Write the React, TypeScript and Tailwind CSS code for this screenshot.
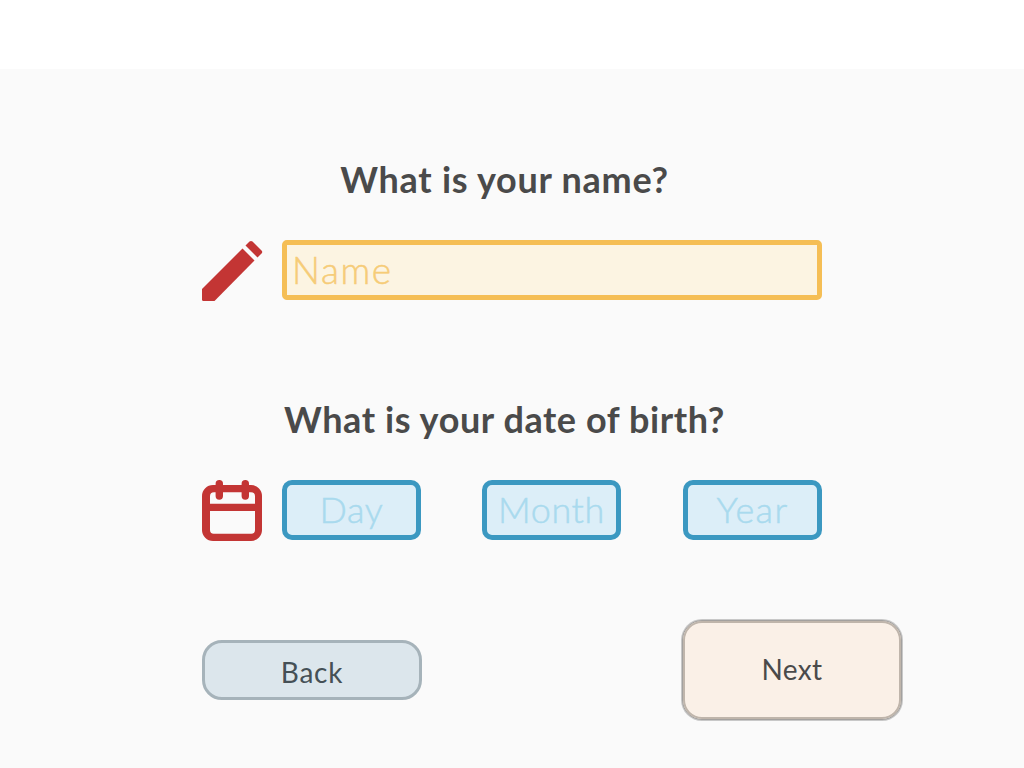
function PencilIcon() {
  return (
    <svg className="h-[61px] w-[61px] shrink-0" viewBox="0 0 61 61" fill="#c33534" aria-hidden="true">
      <path d="M0 49 40.5 8.5 52.5 20.5 12.5 61H1.5Q0 61 0 59.5Z" />
      <path d="M43.5 5.5 47.5 1.5Q49 .3 50.5 1.5L59.5 10.5Q61 12 59.5 13.5L55.5 17.5Z" />
    </svg>
  );
}

function CalendarIcon() {
  return (
    <svg className="h-[61px] w-[61px] shrink-0" viewBox="0 0 61 61" fill="none" aria-hidden="true">
      <path fill="#c33534" fillRule="evenodd" d="M11 5H49A11 11 0 0 1 60 16V50A11 11 0 0 1 49 61H11A11 11 0 0 1 0 50V16A11 11 0 0 1 11 5ZM12 12.3A4 4 0 0 0 8 16.3V23.8H53V16.3A4 4 0 0 0 49 12.3ZM8 31V50A3.7 3.7 0 0 0 11.7 53.7H49.3A3.7 3.7 0 0 0 53 50V31Z" />
      <path d="M17.3 3.7V16M43.3 3.7V16" stroke="#c33534" strokeWidth="7.4" strokeLinecap="round" />
    </svg>
  );
}

function DateField({ label, className }: { label: string; className: string }) {
  return (
    <input
      aria-label={label}
      placeholder={label}
      className={`h-[60px] w-[139px] rounded-[10px] border-[5px] border-[#3b98c1] bg-[#dceef8] p-0 pb-[2px] text-center text-[36px] font-light [-webkit-text-stroke:0.5px_#a9daee] placeholder:text-[#a9daee] ${className}`}
    />
  );
}

export default function App() {
  return (
    <div className="flex h-[768px] w-[1024px] flex-col bg-[#fafafa] font-['Lato',sans-serif] text-[#4a4a4a]">
      <header className="h-[69px] bg-white" />
      <main className="ml-[202px] w-[700px] pt-[85px]">
        <h1 className="h-[50px] w-[605px] text-center text-[36px] leading-[50px] font-bold tracking-[0.74px]">What is your name?</h1>
        <div className="mt-[36px] flex gap-[19px]">
          <PencilIcon />
          <input
            aria-label="Name"
            placeholder="Name"
            className="h-[60px] w-[540px] rounded-[5px] border-[5px] border-[#f5be55] bg-[#fcf4e2] px-[5px] pb-[2px] text-[37px] font-light tracking-[1.6px] [-webkit-text-stroke:0.5px_#f6cc78] placeholder:text-[#f6cc78]"
          />
        </div>
        <h2 className="mt-[93px] h-[50px] w-[605px] text-center text-[36px] leading-[50px] font-bold tracking-[0.59px]">What is your date of birth?</h2>
        <div className="mt-[36px] flex gap-[19px]">
          <CalendarIcon />
          <div className="flex w-[540px] gap-[61px]">
            <DateField label="Day" className="tracking-[0.7px]" />
            <DateField label="Month" className="tracking-[0.6px]" />
            <DateField label="Year" className="ml-[1px] tracking-[1.4px]" />
          </div>
        </div>
        <div className="mt-[79px] flex items-center justify-between">
          <button className="h-[60px] w-[220px] rounded-[20px] border-[3px] border-[#a6b3ba] bg-[#dce6ec] pt-[3px] text-[28px] tracking-[0.8px] text-[#455056]">Back</button>
          <button className="h-[100px] w-[220px] rounded-[20px] border border-[#a3a19f] bg-[#faf0e7] pb-[2px] text-[28px] tracking-[0.4px] shadow-[0_0_0_1px_#c8c8c8,inset_0_0_0_2px_#bfb5ab]">Next</button>
        </div>
      </main>
    </div>
  );
}
